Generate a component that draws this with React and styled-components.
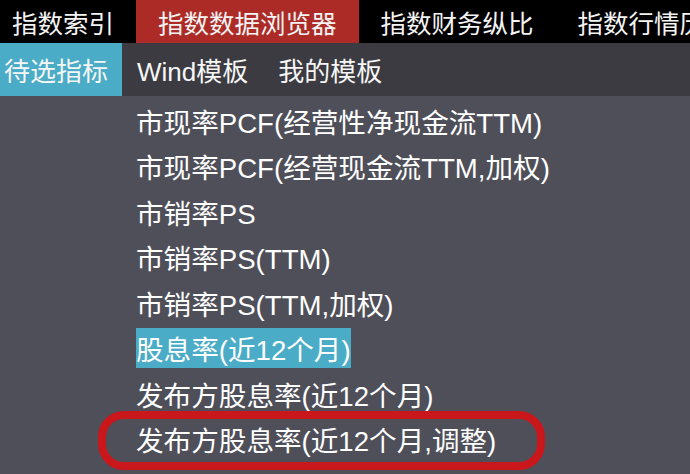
import React from "react";
import styled, { createGlobalStyle } from "styled-components";

const GlobalStyle = createGlobalStyle`
  html, body {
    margin: 0;
    padding: 0;
    background: #4f4f59;
    overflow: hidden;
  }
  body {
    font-family: "Liberation Sans", "Noto Sans CJK SC", sans-serif;
    color: #fff;
  }
`;

const Page = styled.div`
  display: flex;
  flex-direction: column;
  height: 100vh;
  width: 100%;
`;

const TopBar = styled.div`
  display: flex;
  height: 43px;
  background: #000;
  white-space: nowrap;
  overflow: hidden;
`;

const Tab = styled.div`
  display: flex;
  align-items: center;
  flex: none;
  padding: 0 22px;
  font-size: 25.5px;
  color: #f4f4f4;
  background: ${(p) => (p.$active ? "#ad2b26" : "transparent")};
  &:first-child {
    margin-left: -10px;
  }
`;

const SubBar = styled.div`
  display: flex;
  align-items: stretch;
  height: 53px;
  background: #3b3b41;
  white-space: nowrap;
`;

const SubTab = styled.div`
  display: flex;
  align-items: center;
  font-size: 26px;
  padding: ${(p) => (p.$active ? "0 14px 0 4px" : "0 15px")};
  background: ${(p) => (p.$active ? "#4aacc6" : "transparent")};
  color: #f6f6f6;
`;

const List = styled.div`
  flex: 1;
  padding-top: 2px;
  background: #4f4f59;
`;

const Row = styled.div`
  position: relative;
  display: flex;
  align-items: center;
  height: 45.5px;
  padding-left: 136px;
  font-size: 27.6px;
  white-space: nowrap;
`;

const Label = styled.span`
  background: ${(p) => (p.$selected ? "#4aacc6" : "transparent")};
`;

const Callout = styled.div`
  position: absolute;
  left: 98px;
  top: -6px;
  width: 447px;
  height: 59px;
  box-sizing: border-box;
  border: 8px solid #c9171c;
  border-radius: 26px;
  pointer-events: none;
`;

const tabs = ["指数索引", "指数数据浏览器", "指数财务纵比", "指数行情历史"];
const subTabs = ["待选指标", "Wind模板", "我的模板"];
const items = [
  "市现率PCF(经营性净现金流TTM)",
  "市现率PCF(经营现金流TTM,加权)",
  "市销率PS",
  "市销率PS(TTM)",
  "市销率PS(TTM,加权)",
  "股息率(近12个月)",
  "发布方股息率(近12个月)",
  "发布方股息率(近12个月,调整)",
];

const App = () => {
  return (
    <Page>
      <GlobalStyle />
      <TopBar>
        {tabs.map((t, i) => (
          <Tab key={t} $active={i === 1}>
            {t}
          </Tab>
        ))}
      </TopBar>
      <SubBar>
        {subTabs.map((t, i) => (
          <SubTab key={t} $active={i === 0}>
            {t}
          </SubTab>
        ))}
      </SubBar>
      <List>
        {items.map((item, i) => (
          <Row key={item}>
            <Label $selected={i === 5}>{item}</Label>
            {i === items.length - 1 && <Callout />}
          </Row>
        ))}
      </List>
    </Page>
  );
};

export default App;
